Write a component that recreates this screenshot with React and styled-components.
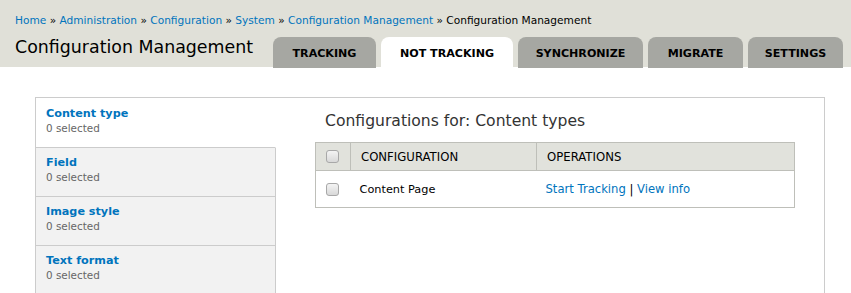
import styled, { createGlobalStyle } from 'styled-components';

const GlobalStyle = createGlobalStyle`
  html, body {
    margin: 0;
    padding: 0;
    background: #fff;
  }
  body {
    font-family: "DejaVu Sans", Verdana, sans-serif;
    font-size: 12px;
    color: #333;
  }
`;

const tabs = [
  { label: 'Tracking', width: 103 },
  { label: 'Not tracking', width: 132, active: true },
  { label: 'Synchronize', width: 125 },
  { label: 'Migrate', width: 95 },
  { label: 'Settings', width: 95 },
];
const groups = ['Content type', 'Field', 'Image style', 'Text format'];

const Checkbox = () => <Check />;

const App = () => {
  return (
    <>
      <GlobalStyle />
      <Branding>
        <Breadcrumb>
          <a href="#">Home</a> » <a href="#">Administration</a> » <a href="#">Configuration</a> »{' '}
          <a href="#">System</a> » <a href="#">Configuration Management</a> » Configuration Management
        </Breadcrumb>
        <TitleRow>
          <PageTitle>Configuration Management</PageTitle>
          <Tabs>
            {tabs.map((t) => (
              <Tab key={t.label} $active={t.active} $width={t.width}>
                {t.label}
              </Tab>
            ))}
          </Tabs>
        </TitleRow>
      </Branding>

      <Content>
        <VerticalTabs>
          <TabList>
            {groups.map((g, i) => (
              <TabItem key={g} $selected={i === 0} $first={i === 0}>
                <strong>{g}</strong>
                <Summary>0 selected</Summary>
              </TabItem>
            ))}
          </TabList>
          <Pane>
            <PaneTitle>Configurations for: Content types</PaneTitle>
            <Table>
              <thead>
                <tr>
                  <Th $narrow>
                    <Checkbox />
                  </Th>
                  <Th $w="165px">Configuration</Th>
                  <Th>Operations</Th>
                </tr>
              </thead>
              <tbody>
                <tr>
                  <Td $narrow>
                    <Checkbox />
                  </Td>
                  <Td>Content Page</Td>
                  <Td $ops>
                    <Link href="#">Start Tracking</Link> | <Link href="#">View info</Link>
                  </Td>
                </tr>
              </tbody>
            </Table>
          </Pane>
        </VerticalTabs>
      </Content>
    </>
  );
};

const Branding = styled.header`
  background-color: #e0e0d8;
  padding: 14px 8px 0 15px;
  height: 53px;
  white-space: nowrap;
`;

const Breadcrumb = styled.div`
  font-size: 10.6px;
  line-height: 13px;
  color: #000;

  a {
    color: #0074bd;
    text-decoration: none;
  }
`;

const TitleRow = styled.div`
  display: flex;
  justify-content: space-between;
  align-items: flex-end;
  margin-top: 9px;
`;

const PageTitle = styled.h1`
  margin: 0 0 10px;
  font-size: 17.4px;
  font-weight: normal;
  line-height: 22px;
  color: #000;
  flex-shrink: 0;
`;

const Tabs = styled.ul`
  display: flex;
  gap: 5px;
  margin: 0;
  padding: 0;
  list-style: none;
`;

const Tab = styled.li`
  width: ${({ $width }) => $width}px;
  height: 31px;
  padding-top: 2px;
  display: flex;
  align-items: center;
  justify-content: center;
  box-sizing: border-box;
  border-radius: 8px 8px 0 0;
  background-color: ${({ $active }) => ($active ? '#fff' : '#a6a7a2')};
  color: #000;
  font-size: 11.1px;
  font-weight: bold;
  text-transform: uppercase;
`;

const Content = styled.main`
  padding: 30px 26px 0 35px;
`;

const VerticalTabs = styled.div`
  display: flex;
  border: 1px solid #ccc;
  min-height: 260px;
`;

const TabList = styled.ul`
  width: 240px;
  margin: 0;
  padding: 0;
  list-style: none;
  flex-shrink: 0;
`;

const TabItem = styled.li`
  padding: ${({ $first }) => ($first ? '9px' : '8px')} 10px 0;
  box-sizing: border-box;
  height: ${({ $first }) => ($first ? '50px' : '49px')};
  border-bottom: 1px solid #ccc;
  border-right: 1px solid ${({ $selected }) => ($selected ? 'transparent' : '#ccc')};
  background: ${({ $selected }) => ($selected ? '#fff' : '#f2f2f2')};

  strong {
    display: block;
    color: #0074bd;
    font-size: 11.2px;
    line-height: 14px;
  }
`;

const Summary = styled.span`
  display: block;
  color: #666;
  font-size: 10.4px;
  line-height: 14px;
`;

const Pane = styled.section`
  flex: 1;
  padding: 12px 0 0 39px;
`;

const PaneTitle = styled.h2`
  margin: 0 0 10px 10px;
  font-size: 15.6px;
  font-weight: normal;
  line-height: 22px;
  color: #333;
`;

const Table = styled.table`
  width: 480px;
  border-collapse: collapse;
  border: 1px solid #bebfb9;
`;

const Th = styled.th`
  height: 27px;
  padding: 0 ${({ $narrow }) => ($narrow ? '0 0 10px' : '10px')};
  width: ${({ $narrow, $w }) => ($narrow ? '24px' : $w || 'auto')};
  background: #e1e2dc;
  border: 1px solid #bebfb9;
  text-align: left;
  font-size: 11.7px;
  font-weight: normal;
  text-transform: uppercase;
  color: #000;
`;

const Td = styled.td`
  height: 36px;
  padding: 0 ${({ $narrow }) => ($narrow ? '0 0 10px' : '9px')};
  font-size: ${({ $ops }) => ($ops ? '11.6px' : '11.3px')};
  color: #000;
`;

const Check = styled.span`
  display: block;
  width: 11px;
  height: 11px;
  border: 1px solid #a8a8a8;
  border-radius: 3px;
  background: linear-gradient(#f4f4f4, #d8d8d8);
`;

const Link = styled.a`
  color: #0074bd;
  text-decoration: none;
`;

export default App;
